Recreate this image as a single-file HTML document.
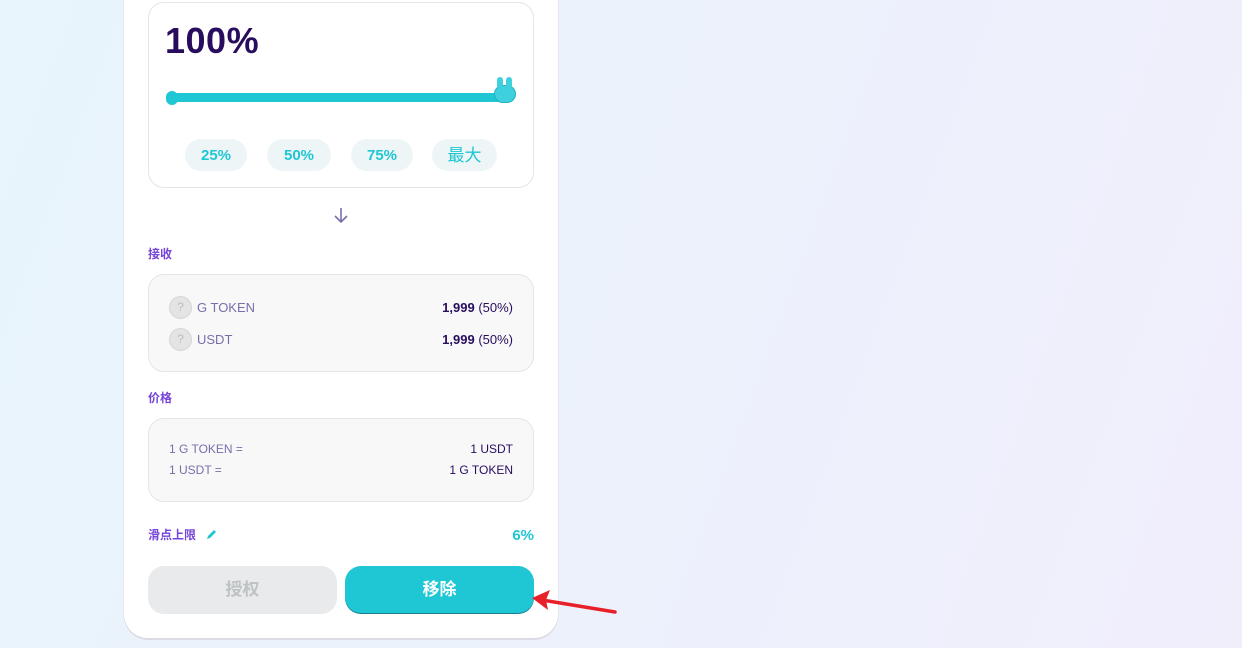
<!DOCTYPE html>
<html><head><meta charset="utf-8"><style>
*{box-sizing:border-box;margin:0;padding:0}
body{width:1242px;height:648px;overflow:hidden;background:linear-gradient(110deg,#e8f5fc 0%,#ecf1fc 55%,#f1eefc 100%);font-family:"Liberation Sans","Noto Sans CJK SC",sans-serif;position:relative}
.card{position:absolute;left:124px;top:-40px;width:434px;height:678px;background:#fff;border-radius:24px;box-shadow:0 2px 0 #dcdce6,0 0 0 1px #e6e8ee}
.box{position:absolute;left:148px;width:386px;border:1px solid #e7e3eb;border-radius:16px}
.pct{position:absolute;left:165px;top:20px;font-size:36px;font-weight:bold;color:#280d5f;letter-spacing:0.5px}
.bar{position:absolute;left:168px;top:93px;width:340px;height:9px;background:#1fc7d4;border-radius:4px}
.pill{position:absolute;top:139px;height:32px;border-radius:16px;background:#eef5f6;color:#1fc7d4;font-weight:bold;font-size:15px;text-align:center;line-height:33px}
.lbl{position:absolute;left:148px;font-size:12px;font-weight:bold;color:#7645d9}
.row{position:absolute;font-size:13px}
.ic{position:absolute;left:169px;width:23px;height:23px;border-radius:50%;background:#e4e4e4;border:1px solid #d6d6d6;color:#bbb;font-size:12px;text-align:center;line-height:21px}
</style></head><body>
<div class="card"></div>
<div class="box" style="top:2px;height:186px;background:#fff"></div>
<div class="pct">100%</div>
<div class="bar"></div>
<div style="position:absolute;left:166px;top:91px;width:12px;height:14px;border-radius:6px;background:#1fc7d4"></div>
<div style="position:absolute;left:494px;top:85px;width:22px;height:18px;border-radius:10px;background:#3ed0dc;border:1px solid #1fb2c0"></div>
<div style="position:absolute;left:497px;top:77px;width:6px;height:12px;border-radius:3px;background:#3ed0dc"></div>
<div style="position:absolute;left:506px;top:77px;width:6px;height:12px;border-radius:3px;background:#3ed0dc"></div>
<div class="pill" style="left:185px;width:62px">25%</div>
<div class="pill" style="left:267px;width:64px">50%</div>
<div class="pill" style="left:351px;width:62px">75%</div>
<div class="pill" style="left:432px;width:65px;font-weight:normal;font-size:17px">最大</div>
<svg style="position:absolute;left:333px;top:207px" width="16" height="17" viewBox="0 0 16 17"><path d="M8 1v14M2 9l6 6 6-6" stroke="#7a6eaa" stroke-width="1.6" fill="none"/></svg>
<div class="lbl" style="top:245px">接收</div>
<div class="box" style="top:274px;height:98px;background:#f8f8f8"></div>
<div class="ic" style="top:296px">?</div><div class="row" style="left:197px;top:300px;color:#7a6eaa">G TOKEN</div>
<div class="row" style="right:729px;top:300px;color:#280d5f"><b>1,999</b> (50%)</div>
<div class="ic" style="top:328px">?</div><div class="row" style="left:197px;top:332px;color:#7a6eaa">USDT</div>
<div class="row" style="right:729px;top:332px;color:#280d5f"><b>1,999</b> (50%)</div>
<div class="lbl" style="top:389px">价格</div>
<div class="box" style="top:418px;height:84px;background:#f8f8f8"></div>
<div class="row" style="left:169px;top:442px;color:#7a6eaa;font-size:12px">1 G TOKEN =</div>
<div class="row" style="right:729px;top:442px;color:#280d5f;font-size:12px">1 USDT</div>
<div class="row" style="left:169px;top:463px;color:#7a6eaa;font-size:12px">1 USDT =</div>
<div class="row" style="right:729px;top:463px;color:#280d5f;font-size:12px">1 G TOKEN</div>
<div class="lbl" style="top:526px">滑点上限</div>
<svg style="position:absolute;left:206px;top:529px" width="11" height="11" viewBox="0 0 11 11"><path d="M1 10l1-3 6-6 2 2-6 6z" fill="#1fc7d4"/></svg>
<div class="row" style="right:708px;top:527px;color:#1fc7d4;font-weight:bold;font-size:15px">6%</div>
<div style="position:absolute;left:148px;top:566px;width:189px;height:48px;border-radius:16px;background:#e9eaeb;color:#bdc2c4;font-weight:bold;font-size:17px;text-align:center;line-height:48px">授权</div>
<div style="position:absolute;left:345px;top:566px;width:189px;height:48px;border-radius:16px;background:#1fc7d4;box-shadow:0 -1px 0 rgba(14,14,44,.4) inset;color:#fff;font-weight:bold;font-size:17px;text-align:center;line-height:48px">移除</div>
<svg style="position:absolute;left:528px;top:585px" width="92" height="32" viewBox="0 0 92 32"><path d="M87 27L14 15" stroke="#e8202a" stroke-width="3.5" stroke-linecap="round"/><path d="M4 13l18-8-4 10 2 10z" fill="#e8202a"/></svg>
</body></html>
